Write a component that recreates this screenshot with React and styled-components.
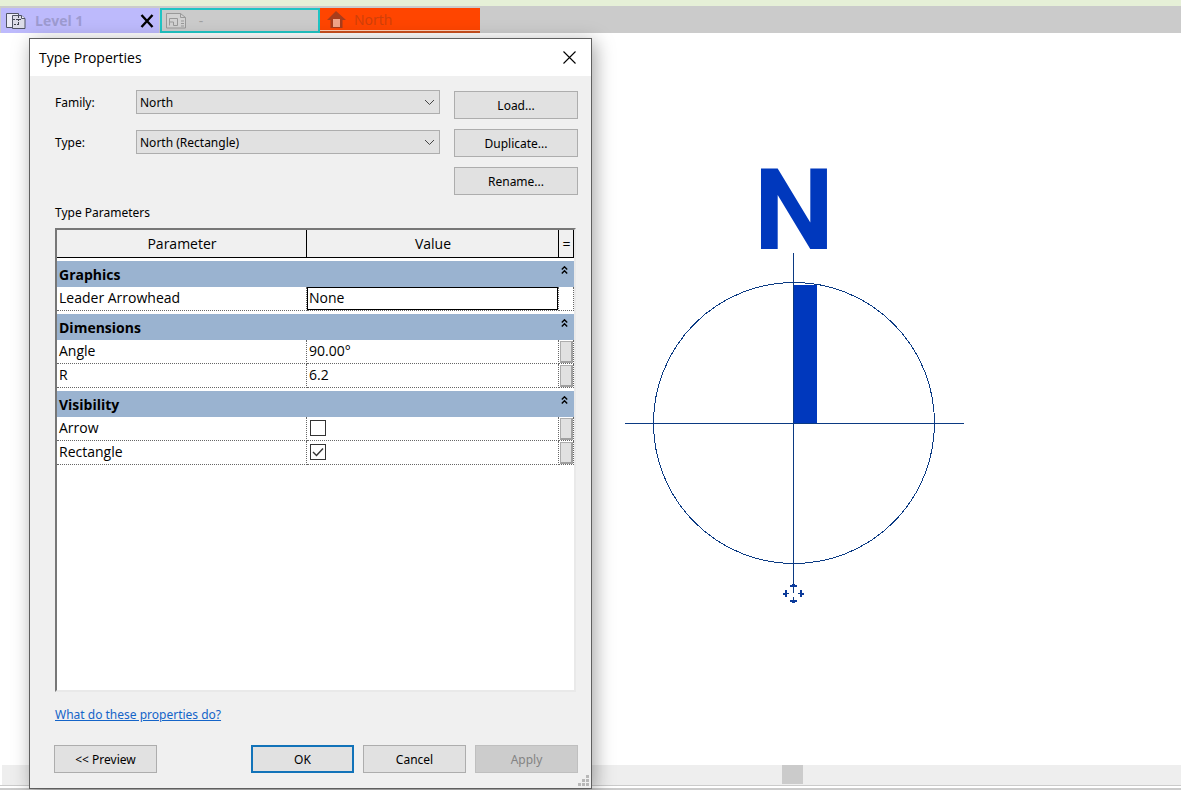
import React from "react";
import styled, { createGlobalStyle, css } from "styled-components";

const GlobalStyle = createGlobalStyle`
  * { box-sizing: border-box; }
  html, body { margin: 0; }
  body {
    background: #fff;
    color: #000;
    font-family: "Noto Sans", "Open Sans", sans-serif;
    font-size: 12px;
  }
  button, input, select { font: inherit; color: inherit; margin: 0; border-radius: 0; }
`;

const Page = styled.div`
  position: relative;
  display: flex;
  flex-direction: column;
  min-height: 100vh;
`;

const Ribbon = styled.div`
  height: 6px;
  background: #e6f0d7;
`;

const TabBar = styled.nav`
  display: flex;
  height: 27px;
  padding-top: 2px;
  background: #cbcbcb;
`;

const tabKinds = {
  active: css`
    background: #bdbafc;
    color: #9d9bd0;
    font-weight: 700;
    border: solid #cbcbcb;
    border-width: 0 1px;
    padding: 0 5px 0 4px;
  `,
  outlined: css`
    background: #cbcbcb;
    color: #a0a0a0;
    border: 2px solid #1fc4c4;
    padding: 0 4px;
  `,
  alert: css`
    background: #ff4500;
    color: #cf3f0a;
    border-bottom: 2px solid #c9501f;
    box-shadow: inset 0 -1px #ffd0b8;
    padding: 0 6px;
  `,
};

const Tab = styled.div`
  display: flex;
  align-items: center;
  gap: 8px;
  flex: 0 1 160px;
  font-family: "Open Sans", sans-serif;
  font-size: 14px;
  line-height: 20px;
  ${(p) => tabKinds[p.$kind]}
`;

const TabLabel = styled.span`
  flex: 1;
`;

const IconButton = styled.button`
  display: flex;
  padding: 0;
  border: 0;
  background: none;
`;

const Canvas = styled.main`
  position: relative;
  flex: 1;
  min-height: 580px;
`;

const Symbol = styled.svg`
  position: absolute;
  left: 624px;
  top: 83px;
  width: 342px;
  height: 490px;
`;

const ScrollTrack = styled.div`
  display: flex;
  justify-content: center;
  height: 20px;
  margin-left: 2px;
  padding-left: 402px;
  background: #eee;
`;

const ScrollThumb = styled.div`
  width: 21px;
  height: 19px;
  background: #cbcbcb;
`;

const StatusEdge = styled.div`
  height: 5px;
  border-top: 1px solid #cbcbcb;
  border-bottom: 2px solid #cbcbcb;
`;

const Dialog = styled.section`
  position: absolute;
  left: 29px;
  top: 38px;
  bottom: 1px;
  width: 563px;
  max-width: calc(100% - 58px);
  display: flex;
  flex-direction: column;
  border: 1px solid #5f5f5f;
  background: #f0f0f0;
  box-shadow: 3px 4px 18px rgba(0, 0, 0, 0.36);
`;

const TitleBar = styled.header`
  display: flex;
  align-items: center;
  justify-content: space-between;
  height: 37px;
  padding: 0 15px 0 9px;
  background: #fff;
`;

const Title = styled.h1`
  margin: 0;
  font-family: "Open Sans", sans-serif;
  font-size: 14px;
  line-height: 20px;
  font-weight: 400;
`;

const Body = styled.div`
  flex: 1;
  display: flex;
  flex-direction: column;
  padding: 14px 13px 15px 25px;
`;

const TypeForm = styled.div`
  display: flex;
  gap: 14px;
`;

const Fields = styled.div`
  flex: 1;
  display: flex;
  flex-direction: column;
  gap: 16px;
`;

const Field = styled.div`
  display: grid;
  grid-template-columns: 81px 1fr;
  align-items: center;
`;

const SelectBox = styled.div`
  display: grid;
  align-items: center;

  > * { grid-area: 1 / 1; }
  > svg { justify-self: end; margin-right: 5px; pointer-events: none; }
`;

const Select = styled.select`
  appearance: none;
  width: 100%;
  height: 24px;
  padding: 0 20px 0 3px;
  border: 1px solid #adadad;
  background: #e1e1e1;
`;

const FormButtons = styled.div`
  display: flex;
  flex-direction: column;
  gap: 10px;
  width: 124px;
  padding-top: 1px;
`;

const Button = styled.button`
  height: 28px;
  padding: 0;
  border: ${(p) => (p.$primary ? "2px solid #1273b9" : "1px solid #adadad")};
  background: #e1e1e1;

  &:disabled {
    background: #ccc;
    border-color: #bfbfbf;
    color: #838383;
  }
`;

const SectionLabel = styled.h2`
  margin: 9px 0 6px;
  font-size: 12px;
  line-height: 18px;
  font-weight: 400;
`;

const ParameterBox = styled.div`
  flex: 1;
  margin-right: 2px;
  border: 2px solid;
  border-color: #777 #e9e9e9 #e9e9e9 #777;
  background: #fff;
`;

const Table = styled.table`
  width: 100%;
  table-layout: fixed;
  border-collapse: separate;
  border-spacing: 0;
  font-family: "Open Sans", sans-serif;
  font-size: 14px;
  line-height: 20px;
`;

const HeadCell = styled.th`
  height: 28px;
  padding: 0 0 0 1px;
  border-right: 1px solid #000;
  border-bottom: 1px solid #000;
  background: #f0f0f0;
  font-weight: 400;
`;

const GroupCell = styled.th`
  height: 29px;
  padding: 0 6px 0 2px;
  border-top: 3px solid #fff;
  background: #9ab3d0;
  text-align: left;
`;

const GroupTitle = styled.div`
  display: flex;
  justify-content: space-between;
  align-items: flex-start;
  height: 18px;

  > button { padding-top: 1px; }
`;

const Cell = styled.td`
  height: 24px;
  padding: ${(p) => (p.$flush ? "0" : "0 0 2px 2px")};
  border-right: 1px dotted #666;
  border-bottom: 1px dotted #666;
  vertical-align: middle;
`;

const ValueInput = styled.input`
  display: block;
  width: 100%;
  height: 23px;
  padding: 0 ${(p) => (p.$boxed ? "1px" : "2px")} 2px;
  border: ${(p) => (p.$boxed ? "1px solid #000" : "0")};
  background: transparent;
  outline: 0;
`;

const Check = styled.input`
  appearance: none;
  display: block;
  width: 16px;
  height: 16px;
  margin: 0 0 1px 3px;
  border: 1px solid #333;
  background: #fff;

  &:checked {
    background: #fff
      url("data:image/svg+xml,%3Csvg xmlns='http://www.w3.org/2000/svg' viewBox='0 0 14 14'%3E%3Cpath d='M2 7l3.500 3.500L12 3.500' fill='none' stroke='%23333' stroke-width='1.400'/%3E%3C/svg%3E");
  }
`;

const LinkButton = styled.button`
  display: block;
  width: 13px;
  height: 22px;
  margin-left: 1px;
  padding: 0;
  border: 1px solid #adadad;
  border-right: 2px solid #a0a0a0;
  border-bottom: 2px solid #a0a0a0;
  background: #e1e1e1;
`;

const HelpLink = styled.a`
  align-self: flex-start;
  margin: 14px 0 21px;
  line-height: 18px;
  color: #1464c8;
`;

const Footer = styled.footer`
  display: grid;
  grid-template-columns: 103px 1fr repeat(3, 103px);
  column-gap: 9px;
  margin-left: -1px;

  > :nth-child(2) { grid-column: 3; }
`;

const Grip = styled.svg`
  position: absolute;
  right: 2px;
  bottom: 2px;
`;

const PlanIcon = () => (
  <svg width="22" height="20" viewBox="0 0 22 20" fill="none" stroke="#505464">
    <path d="M1.500 2.500h12v3h-5v11h-7z" fill="#ececf6" />
    <path d="M7.500 4.500h9l3.500 3v10h-12.500z" fill="#dcdce8" />
    <path d="M8 8.500h9M13.500 5v8M9 13.500h5" stroke="#404450" strokeDasharray="2 1" />
    <path d="M16.500 4.500v3h3.500" fill="#f4f4fa" />
  </svg>
);

const SheetIcon = () => (
  <svg width="21" height="18" viewBox="0 0 21 18" fill="none" stroke="#999">
    <path d="M.5 1.500h14l5 4v10.500H.5z" fill="#d2d2d2" />
    <path d="M3.500 13.500v-7h8v7h-4v-3.500h-4M14.500 1.500v4h5M15 9h3M15 11.500h3M15 14h3" />
  </svg>
);

const HouseIcon = () => (
  <svg width="20" height="18" viewBox="0 0 20 18">
    <path d="M10 0l10 9h-3.500v8h-12V9H1z" fill="#a83d1c" />
    <path d="M7 8h7v8H7z" fill="#f0a488" />
  </svg>
);

const TabCloseIcon = () => (
  <svg width="14" height="14" viewBox="0 0 14 14" stroke="#000" strokeWidth="2.400">
    <path d="M1.500 1l11 12M12.500 1l-11 12" />
  </svg>
);

const CloseIcon = () => (
  <svg width="13" height="13" viewBox="0 0 13 13" stroke="#000" strokeWidth="1.100">
    <path d="M.5.5l12 12M12.500.5l-12 12" />
  </svg>
);

const ChevronIcon = () => (
  <svg width="11" height="7" viewBox="0 0 11 7" fill="none" stroke="#444">
    <path d="M1 1l4.500 4.500L10 1" />
  </svg>
);

const CollapseIcon = () => (
  <svg width="7" height="8" viewBox="0 0 7 8" fill="none" stroke="#000" strokeWidth="1.400">
    <path d="M.8 3.500l2.700-2.700 2.700 2.700M.8 7.500l2.700-2.700 2.700 2.700" />
  </svg>
);

const NorthArrow = () => (
  <Symbol viewBox="624 116 342 490" fill="none" stroke="#0b3a83" role="img" aria-label="North symbol">
    <text
      x="794"
      y="249"
      textAnchor="middle"
      fontFamily="Roboto, sans-serif"
      fontWeight="700"
      fontSize="114"
      fill="#0038bd"
      stroke="none"
    >
      N
    </text>
    <g shapeRendering="crispEdges">
      <rect x="793" y="285" width="24" height="139" fill="#0038bd" stroke="none" />
      <circle cx="794" cy="423" r="140.500" />
      <path d="M625 423.500h339M793.500 253v340" />
      <path d="M785 593.500h4M798 593.500h4M793.500 597v6" />
      <g fill="#0b3a9a" stroke="none">
        <path d="M790 585h7v2h-7zM792 584h3v1h-3zM790 600h7v2h-7zM792 602h3v1h-3z" />
        <path d="M785 590h2v7h-2zM783 593h2v2h-2zM800 590h2v7h-2zM802 593h2v2h-2z" />
      </g>
    </g>
  </Symbol>
);

const groups = [
  { name: "Graphics", rows: [{ name: "Leader Arrowhead", value: "None", boxed: true }] },
  {
    name: "Dimensions",
    rows: [
      { name: "Angle", value: "90.00°" },
      { name: "R", value: "6.2" },
    ],
  },
  {
    name: "Visibility",
    rows: [
      { name: "Arrow", checked: false },
      { name: "Rectangle", checked: true },
    ],
  },
];

const SelectField = ({ id, label, value }) => (
  <Field>
    <label htmlFor={id}>{label}</label>
    <SelectBox>
      <Select id={id} defaultValue={value}>
        <option>{value}</option>
      </Select>
      <ChevronIcon />
    </SelectBox>
  </Field>
);

const ParameterRow = ({ row }) => {
  const id = `param-${row.name.replace(" ", "-").toLowerCase()}`;
  return (
    <tr>
      <Cell>
        <label htmlFor={id}>{row.name}</label>
      </Cell>
      <Cell $flush>
        {row.value === undefined ? (
          <Check id={id} type="checkbox" defaultChecked={row.checked} />
        ) : (
          <ValueInput id={id} $boxed={row.boxed} defaultValue={row.value} />
        )}
      </Cell>
      <Cell $flush>{!row.boxed && <LinkButton aria-label={`Associate ${row.name}`} />}</Cell>
    </tr>
  );
};

export default function App() {
  return (
    <Page>
      <GlobalStyle />
      <Ribbon />
      <TabBar>
        <Tab $kind="active">
          <PlanIcon />
          <TabLabel>Level 1</TabLabel>
          <IconButton aria-label="Close view">
            <TabCloseIcon />
          </IconButton>
        </Tab>
        <Tab $kind="outlined">
          <SheetIcon />
          <TabLabel>&nbsp;-</TabLabel>
        </Tab>
        <Tab $kind="alert">
          <HouseIcon />
          <TabLabel>North</TabLabel>
        </Tab>
      </TabBar>
      <Canvas>
        <NorthArrow />
      </Canvas>
      <ScrollTrack>
        <ScrollThumb />
      </ScrollTrack>
      <StatusEdge />

      <Dialog role="dialog" aria-labelledby="dialog-title">
        <TitleBar>
          <Title id="dialog-title">Type Properties</Title>
          <IconButton aria-label="Close">
            <CloseIcon />
          </IconButton>
        </TitleBar>
        <Body>
          <TypeForm>
            <Fields>
              <SelectField id="family" label="Family:" value="North" />
              <SelectField id="type" label="Type:" value="North (Rectangle)" />
            </Fields>
            <FormButtons>
              <Button>Load...</Button>
              <Button>Duplicate...</Button>
              <Button>Rename...</Button>
            </FormButtons>
          </TypeForm>
          <SectionLabel>Type Parameters</SectionLabel>
          <ParameterBox>
            <Table>
              <colgroup>
                <col width="250" />
                <col />
                <col width="15" />
              </colgroup>
              <thead>
                <tr>
                  <HeadCell>Parameter</HeadCell>
                  <HeadCell>Value</HeadCell>
                  <HeadCell>=</HeadCell>
                </tr>
              </thead>
              {groups.map((group) => (
                <tbody key={group.name}>
                  <tr>
                    <GroupCell colSpan={3}>
                      <GroupTitle>
                        {group.name}
                        <IconButton aria-label={`Collapse ${group.name}`}>
                          <CollapseIcon />
                        </IconButton>
                      </GroupTitle>
                    </GroupCell>
                  </tr>
                  {group.rows.map((row) => (
                    <ParameterRow key={row.name} row={row} />
                  ))}
                </tbody>
              ))}
            </Table>
          </ParameterBox>
          <HelpLink href="#help">What do these properties do?</HelpLink>
          <Footer>
            <Button>&lt;&lt; Preview</Button>
            <Button $primary>OK</Button>
            <Button>Cancel</Button>
            <Button disabled>Apply</Button>
          </Footer>
        </Body>
        <Grip width="11" height="11" viewBox="0 0 11 11" fill="#b8b8b8">
          <path d="M8 0h3v3H8zM4 4h3v3H4zM8 4h3v3H8zM0 8h3v3H0zM4 8h3v3H4zM8 8h3v3H8z" />
        </Grip>
      </Dialog>
    </Page>
  );
}
